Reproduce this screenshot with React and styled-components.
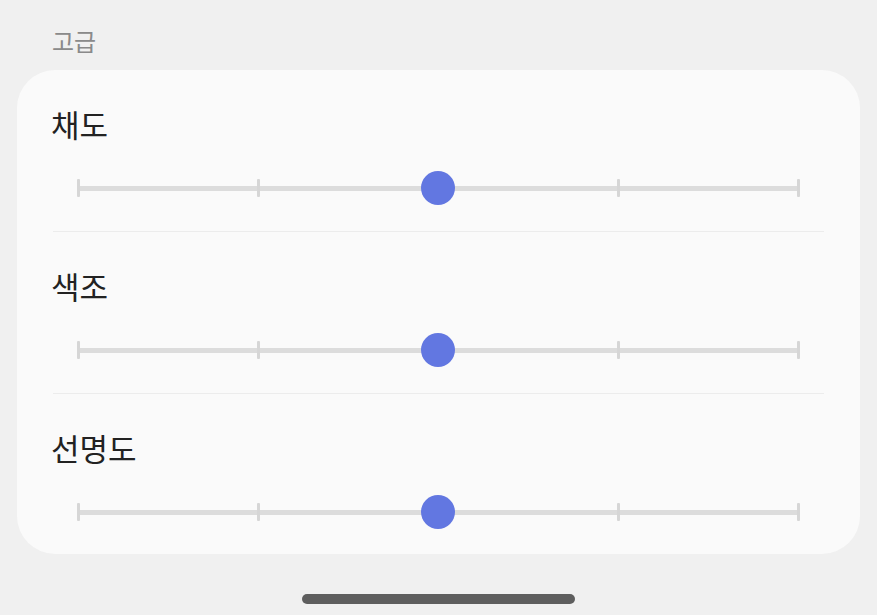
import React from 'react'
import styled, { createGlobalStyle } from 'styled-components'

const GlobalStyle = createGlobalStyle`
  html, body {
    margin: 0;
    padding: 0;
    background: #f0f0f0;
  }
  body {
    font-family: "Noto Sans CJK KR", "Noto Sans", Roboto, sans-serif;
  }
`

const settings = [
  { id: 'saturation', label: '채도', value: 50 },
  { id: 'hue', label: '색조', value: 50 },
  { id: 'sharpness', label: '선명도', value: 50 },
]

const TICKS = 5

const Slider = ({ value }) => (
  <SliderWrap>
    <Track>
      {Array.from({ length: TICKS }).map((_, i) => (
        <Tick key={i} />
      ))}
    </Track>
    <Thumb style={{ left: `${value}%` }} />
  </SliderWrap>
)

const App = () => {
  return (
    <Page>
      <GlobalStyle />
      <GroupLabel>고급</GroupLabel>
      <Card>
        {settings.map((s, i) => (
          <Section key={s.id} $last={i === settings.length - 1}>
            <Title>{s.label}</Title>
            <Slider value={s.value} />
          </Section>
        ))}
      </Card>
      <HomeBar />
    </Page>
  )
}

export default App

const Page = styled.div`
  width: 877px;
  height: 615px;
  box-sizing: border-box;
  padding: 28px 17px 0;
  display: flex;
  flex-direction: column;
  overflow: hidden;
`

const GroupLabel = styled.div`
  font-size: 24px;
  line-height: 26px;
  color: #8a8a8a;
  padding-left: 35px;
  margin-bottom: 16px;
`

const Card = styled.div`
  background: #fafafa;
  border-radius: 38px;
  display: flex;
  flex-direction: column;
`

const Section = styled.div`
  padding-top: 36px;
  padding-bottom: ${({ $last }) => ($last ? '24px' : '25px')};
  margin: 0 36px 0 36px;
  border-bottom: ${({ $last }) => ($last ? 'none' : '1px solid #ececec')};
`

const Title = styled.div`
  font-size: 31px;
  line-height: 36px;
  color: #222222;
  margin-left: -2px;
  margin-bottom: 28px;
`

const SliderWrap = styled.div`
  position: relative;
  height: 36px;
  margin: 0 24px 0 23.5px;
  display: flex;
  align-items: center;
`

const Track = styled.div`
  flex: 1;
  height: 18px;
  display: flex;
  justify-content: space-between;
  align-items: center;
  background: linear-gradient(#dcdcdc, #dcdcdc) center / 100% 5px no-repeat;
`

const Tick = styled.div`
  width: 3px;
  height: 18px;
  background: #d6d6d6;
  border-radius: 1px;
`

const Thumb = styled.div`
  position: absolute;
  top: 50%;
  width: 34px;
  height: 34px;
  border-radius: 50%;
  background: #6277e1;
  transform: translate(-50%, -50%);
`

const HomeBar = styled.div`
  align-self: center;
  margin-top: 40px;
  width: 273px;
  height: 10px;
  border-radius: 5px;
  background: #5e5e5e;
`
